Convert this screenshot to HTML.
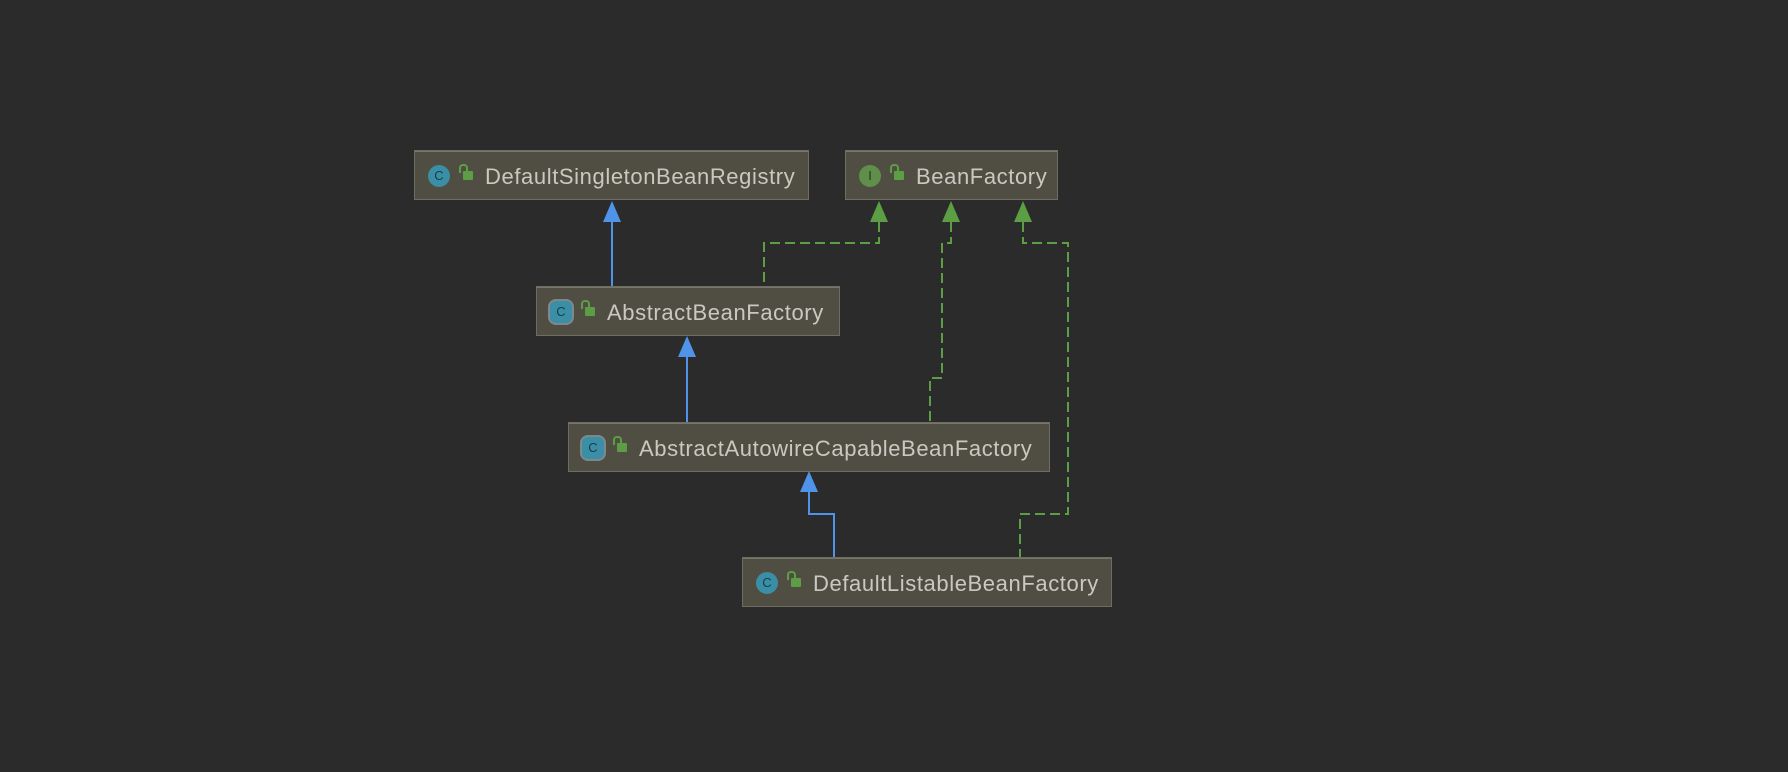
<!DOCTYPE html>
<html><head><meta charset="utf-8"><style>
html,body{margin:0;padding:0;background:#2b2b2b;}
body{width:1788px;height:772px;position:relative;overflow:hidden;font-family:"Liberation Sans",sans-serif;}
.box{position:absolute;box-sizing:border-box;background:#504e42;border:1px solid #6e6d62;box-shadow:0 1px 0 #77766a inset;color:#c9c9c2;font-size:22px;letter-spacing:0.6px;line-height:51px;white-space:nowrap;}
.ic{position:absolute;top:14px;width:22px;height:22px;border-radius:50%;background:#3a8fa6;color:#173d4a;font-size:13px;letter-spacing:0;line-height:22px;text-align:center;}
.ic.i{background:#5f8f4a;color:#263a1c;}
.ic.a{border-radius:6px;box-shadow:0 0 0 2px #7d8a8d;}
.lk{position:absolute;top:20px;width:10px;height:9px;background:#5c9e44;border-radius:1px;}
.lk:before{content:"";position:absolute;left:-4px;top:-7px;width:5px;height:7px;border:2px solid #5c9e44;border-bottom:none;border-radius:4px 4px 0 0;}
.t{position:absolute;left:70px;top:0;}
</style></head><body>
<svg width="1788" height="772" style="position:absolute;left:0;top:0">
<g stroke="#4f94e8" stroke-width="2" fill="none">
<path d="M612 222V286"/><path d="M687 357V422"/><path d="M809 492V514H834V557"/>
</g>
<g fill="#4f94e8">
<path d="M612 201L603 222H621Z"/><path d="M687 336L678 357H696Z"/><path d="M809 471L800 492H818Z"/>
</g>
<g stroke="#5c9e44" stroke-width="2" fill="none" stroke-dasharray="10 5">
<path d="M879 222V243H764V286"/><path d="M951 222V243H942V378H930V422"/><path d="M1023 222V243H1068V514H1020V557"/>
</g>
<g fill="#5c9e44">
<path d="M879 201L870 222H888Z"/><path d="M951 201L942 222H960Z"/><path d="M1023 201L1014 222H1032Z"/>
</g>
</svg>
<div class="box" style="left:414px;top:150px;width:395px;height:50px"><span class="ic" style="left:13px">C</span><span class="lk" style="left:48px"></span><span class="t">DefaultSingletonBeanRegistry</span></div>
<div class="box" style="left:845px;top:150px;width:213px;height:50px"><span class="ic i" style="left:13px">I</span><span class="lk" style="left:48px"></span><span class="t">BeanFactory</span></div>
<div class="box" style="left:536px;top:286px;width:304px;height:50px"><span class="ic a" style="left:13px">C</span><span class="lk" style="left:48px"></span><span class="t">AbstractBeanFactory</span></div>
<div class="box" style="left:568px;top:422px;width:482px;height:50px"><span class="ic a" style="left:13px">C</span><span class="lk" style="left:48px"></span><span class="t">AbstractAutowireCapableBeanFactory</span></div>
<div class="box" style="left:742px;top:557px;width:370px;height:50px"><span class="ic" style="left:13px">C</span><span class="lk" style="left:48px"></span><span class="t">DefaultListableBeanFactory</span></div>
</body></html>
